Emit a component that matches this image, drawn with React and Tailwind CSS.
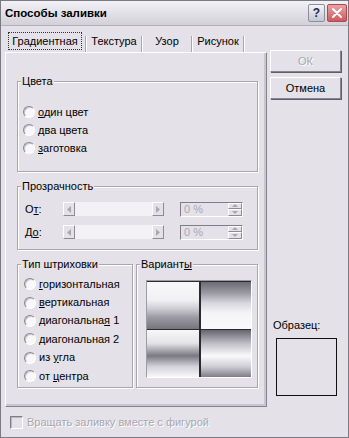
import React from "react";

const BG = "bg-[#e4e1e8]";

function Radio() {
  return (
    <span className="inline-block w-[12px] h-[12px] shrink-0 rounded-full bg-[#f8f7fa] border border-t-[#8a8890] border-l-[#8a8890] border-r-[#ffffff] border-b-[#ffffff] shadow-[inset_1px_1px_0_#c8c6cd]" />
  );
}

function Group({ label, className, children }) {
  return (
    <div
      className={
        "relative border border-[#a9a6ae] shadow-[1px_1px_0_#ffffff,inset_1px_1px_0_#ffffff] " +
        className
      }
    >
      <span className={"absolute left-[3px] top-[-8px] px-[1px] leading-[14px] " + BG}>
        {label}
      </span>
      {children}
    </div>
  );
}

function Tri({ dir, color = "#a9a7af" }) {
  const pts =
    dir === "left"
      ? "4,0 0,3.5 4,7"
      : dir === "right"
      ? "0,0 4,3.5 0,7"
      : dir === "up"
      ? "0,3 3,0 6,3"
      : "0,0 3,3 6,0";
  const w = dir === "left" || dir === "right" ? 4 : 6;
  const h = dir === "left" || dir === "right" ? 7 : 3;
  return (
    <svg width={w} height={h} viewBox={`0 0 ${w} ${h}`}>
      <polygon points={pts} fill={color} />
    </svg>
  );
}

function ArrowBtn({ dir }) {
  return (
    <div className="w-[12px] h-[14px] shrink-0 flex items-center justify-center bg-[#e4e1e8] border border-t-[#ffffff] border-l-[#ffffff] border-r-[#8d8b93] border-b-[#8d8b93]">
      <Tri dir={dir} />
    </div>
  );
}

function SliderRow({ label }) {
  return (
    <div className="flex items-center h-[14px]">
      <div className="w-[38px] shrink-0">{label}</div>
      <div className="flex w-[101px] h-[14px]">
        <ArrowBtn dir="left" />
        <div className="flex-1 bg-[#f3f1f5]" />
        <ArrowBtn dir="right" />
      </div>
      <div className="ml-[16px] w-[63px] h-[15px] flex border border-t-[#7f7d85] border-l-[#7f7d85] border-r-[#ffffff] border-b-[#ffffff]">
        <span className="flex-1 pl-[3px] leading-[13px] text-[#aaa8b0]">0 %</span>
        <div className="w-[14px] flex flex-col">
          <div className="flex-1 flex items-center justify-center border border-t-[#ffffff] border-l-[#ffffff] border-r-[#8d8b93] border-b-[#8d8b93]">
            <Tri dir="up" />
          </div>
          <div className="flex-1 flex items-center justify-center border border-t-[#ffffff] border-l-[#ffffff] border-r-[#8d8b93] border-b-[#8d8b93]">
            <Tri dir="down" />
          </div>
        </div>
      </div>
    </div>
  );
}

function Sep() {
  return <span className="w-[2px] h-[16px] self-end border-l border-[#a8a6ae] border-r border-r-[#ffffff]" />;
}

function Btn({ children, disabled }) {
  return (
    <div className="w-[71px] h-[22px] flex items-center justify-center border border-t-[#ffffff] border-l-[#ffffff] border-r-[#86848c] border-b-[#86848c] shadow-[1px_1px_0_#5f5d65]">
      <span className={disabled ? "text-[#a9a7af] [text-shadow:1px_1px_0_#ffffff]" : "text-black"}>
        {children}
      </span>
    </div>
  );
}

function RItem({ children, h = "h-[18px]" }) {
  return (
    <div className={"flex items-center gap-[3px] " + h}>
      <Radio />
      <span className="leading-[13px]">{children}</span>
    </div>
  );
}

export default function App() {
  return (
    <div className="w-[349px] h-[438px] bg-[#e4e1e8] border border-[#7b7981] flex flex-col overflow-hidden text-[11px] text-black font-['Liberation_Sans',Arial,sans-serif]">
      {/* Title bar */}
      <div className="h-[25px] shrink-0 flex items-center pl-[4px] pr-[1px] border-b border-[#b3b1b8] bg-gradient-to-b from-[#f2f1f5] to-[#d3d1d8]">
        <span className="flex-1 font-bold text-[11.5px] leading-[14px]">Способы заливки</span>
        <div className="w-[17px] h-[18px] rounded-[2px] border border-[#8b8e9c] bg-gradient-to-b from-[#f5f6f9] to-[#c4c7d3] flex items-center justify-center">
          <span className="font-bold text-[12px] leading-[12px] text-[#1e2848]">?</span>
        </div>
        <div className="ml-[2px] w-[20px] h-[18px] rounded-[2px] border border-[#b0484d] bg-gradient-to-b from-[#eaa2a4] to-[#cc5a60] flex items-center justify-center">
          <svg width="10" height="10" viewBox="0 0 10 10">
            <path d="M1 1 L9 9 M9 1 L1 9" stroke="#ffffff" strokeWidth="2" strokeLinecap="round" />
          </svg>
        </div>
      </div>

      {/* Body */}
      <div className="flex-1 flex flex-col pl-[4px]">
        <div className="flex">
          {/* Left: tabs + panel */}
          <div className="w-[262px] flex flex-col">
            <div className="mt-[6px] h-[20px] flex items-stretch">
              <div className="w-[80px] flex items-center justify-center pb-[2px]">
                <span className="border border-dotted border-[#333333] px-[3px] leading-[16px]">Градиентная</span>
              </div>
              <Sep />
              <div className="w-[54px] flex items-center justify-center pb-[2px]">Текстура</div>
              <Sep />
              <div className="w-[48px] flex items-center justify-center pb-[2px]">Узор</div>
              <Sep />
              <div className="w-[50px] flex items-center justify-center pb-[2px]">Рисунок</div>
              <Sep />
            </div>
            <div className="h-[355px] border border-t-[#ffffff] border-l-[#ffffff] border-r-[#85838b] border-b-[#85838b] shadow-[inset_-2px_-2px_0_#c9c7ce] pl-[11px] flex flex-col">
              <Group label="Цвета" className="mt-[28px] w-[241px] h-[91px] shrink-0">
                <div className="pl-[5px] pt-[21px] flex flex-col">
                  <RItem>
                    <span className="underline">о</span>дин цвет
                  </RItem>
                  <RItem>
                    <span className="underline">д</span>ва цвета
                  </RItem>
                  <RItem>
                    <span className="underline">з</span>аготовка
                  </RItem>
                </div>
              </Group>

              <Group label="Прозрачность" className="mt-[14px] w-[241px] h-[64px] shrink-0">
                <div className="pl-[7px] pt-[15px] flex flex-col gap-[9px]">
                  <SliderRow
                    label={
                      <span>
                        О<span className="underline">т</span>:
                      </span>
                    }
                  />
                  <SliderRow
                    label={
                      <span>
                        Д<span className="underline">о</span>:
                      </span>
                    }
                  />
                </div>
              </Group>

              <div className="mt-[14px] flex h-[124px] shrink-0">
                <Group label="Тип штриховки" className="w-[116px] h-full">
                  <div className="pl-[6px] pt-[10px] flex flex-col">
                    <RItem h="h-[18.4px]">
                      <span className="underline">г</span>оризонтальная
                    </RItem>
                    <RItem h="h-[18.4px]">
                      <span className="underline">в</span>ертикальная
                    </RItem>
                    <RItem h="h-[18.4px]">
                      диагональна<span className="underline">я</span> 1
                    </RItem>
                    <RItem h="h-[18.4px]">диагональная 2</RItem>
                    <RItem h="h-[18.4px]">
                      из <span className="underline">у</span>гла
                    </RItem>
                    <RItem h="h-[18.4px]">
                      от <span className="underline">ц</span>ентра
                    </RItem>
                  </div>
                </Group>
                <Group label={<span>Вариант<span className="underline">ы</span></span>} className="ml-[3px] w-[122px] h-full">
                  <div className="pl-[9px] pt-[15px]">
                    <div className="w-[106px] h-[98px] border border-t-[#9d9ba3] border-l-[#9d9ba3] border-r-[#ffffff] border-b-[#ffffff] grid grid-cols-2 grid-rows-2">
                      <div className="border-t border-[#2a2a30] bg-[linear-gradient(to_bottom,#f8f8fa_0%,#f1f1f4_38%,#d2d0d8_55%,#9c9aa2_75%,#76747c_100%)]" />
                      <div className="border-t border-l-2 border-[#2a2a30] bg-[linear-gradient(to_bottom,#6c6a72_0%,#98969e_22%,#d8d6de_45%,#f4f4f7_65%,#fafafc_100%)]" />
                      <div className="border-t border-[#2a2a30] bg-[linear-gradient(to_bottom,#f8f8fa_0%,#e4e4e8_28%,#7a7880_55%,#d4d2da_78%,#f8f8fa_100%)]" />
                      <div className="border-t border-l-2 border-[#2a2a30] bg-[linear-gradient(to_bottom,#66646c_0%,#c4c2ca_30%,#fafafc_55%,#cecdd4_78%,#7e7c84_100%)]" />
                    </div>
                  </div>
                </Group>
              </div>
            </div>
          </div>

          {/* Right column */}
          <div className="ml-[3px] w-[71px] flex flex-col">
            <div className="mt-[24px]">
              <Btn disabled>ОК</Btn>
            </div>
            <div className="mt-[5px]">
              <Btn>Отмена</Btn>
            </div>
            <div className="mt-[220px] ml-[3px] leading-[13px]">Образец:</div>
            <div className="mt-[6px] ml-[6px] w-[61px] h-[58px] border border-[#111111]" />
          </div>
        </div>

        {/* Bottom checkbox */}
        <div className="mt-[9px] ml-[5px] flex items-center gap-[4px] h-[13px]">
          <span className="w-[13px] h-[13px] shrink-0 bg-[#e4e1e8] border border-t-[#7f7d85] border-l-[#7f7d85] border-r-[#ffffff] border-b-[#ffffff] shadow-[inset_1px_1px_0_#b9b7be]" />
          <span className="text-[#a9a7af] [text-shadow:1px_1px_0_#ffffff] leading-[13px]">
            Вращать заливку вместе с фигурой
          </span>
        </div>
      </div>
    </div>
  );
}
